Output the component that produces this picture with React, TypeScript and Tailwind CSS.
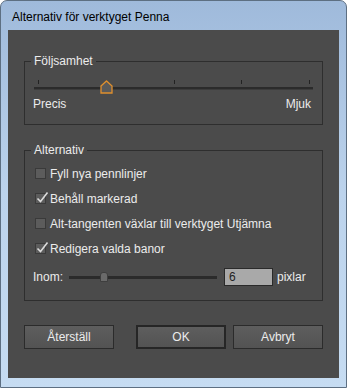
import React from "react";

const font = { fontFamily: '"Liberation Sans", Arial, sans-serif' };

function Checkbox({ checked, label }: { checked: boolean; label: string }) {
  return (
    <div className="flex items-center h-[25px] pl-[10px]">
      <div className="relative w-[11px] h-[11px] border border-[#3a3a3a] bg-[#5c5c5c]">
        {checked && (
          <svg className="absolute left-[0px] top-[-3px]" width="13" height="13" viewBox="0 0 13 13">
            <path d="M1.5 7.5 L4.5 10.5 L11.5 1.5" fill="none" stroke="#dcdcdc" strokeWidth="1.6" />
          </svg>
        )}
      </div>
      <span className="ml-[4px] text-[12px] leading-[14px] text-[#ececec]">{label}</span>
    </div>
  );
}

function Button({ label, primary }: { label: string; primary?: boolean }) {
  return (
    <div
      className={
        "w-[90px] h-[24px] flex items-center justify-center text-[12px] text-[#ececec] bg-gradient-to-b from-[#5e5e5e] to-[#535353] " +
        (primary ? "border-2 border-[#262626]" : "border border-[#2b2b2b]")
      }
    >
      {label}
    </div>
  );
}

export default function App() {
  const ticks = [4, 72, 140, 207, 275];
  return (
    <div
      style={font}
      className="w-[347px] h-[388px] rounded-t-[7px] border border-[#5d6f82] bg-gradient-to-b from-[#9fbadb] via-[#bcd3ec] to-[#c6dcf2] flex flex-col px-[7px] pb-[9px]"
    >
      <div className="h-[29px] flex items-center pl-[4px] pt-[2px] text-[12px] text-black">
        Alternativ för verktyget Penna
      </div>
      <div className="flex-1 bg-[#4b4b4b] px-[16px] flex flex-col">
        <fieldset className="mt-[24px] border border-[#2e2e2e]">
          <legend className="ml-[6px] px-[3px] text-[12px] leading-[14px] text-[#ececec]">Följsamhet</legend>
          <div className="relative mx-[9px] mt-[11px] h-[16px]">
            <div className="absolute left-0 right-0 top-[8px] h-[3px] bg-[#2b2b2b] border-b border-[#3c3c3c]" />
            {ticks.map((t, i) => (
              <div key={i} className="absolute top-[1px] w-[1px] h-[4px] bg-[#222]" style={{ left: t }} />
            ))}
            <svg className="absolute left-[66px] top-[1px]" width="13" height="14" viewBox="0 0 13 14">
              <path d="M1 6 L6.5 1 L12 6 L12 13 L1 13 Z" fill="#5a5a5a" stroke="#e0902e" strokeWidth="1.3" />
            </svg>
          </div>
          <div className="flex justify-between px-[8px] pl-[8px] pr-[11px] mt-[2px] h-[14px] text-[12px] leading-[14px] text-[#ececec]">
            <span>Precis</span>
            <span>Mjuk</span>
          </div>
          <div className="h-[13px]" />
        </fieldset>

        <fieldset className="mt-[18px] border border-[#2e2e2e]">
          <legend className="ml-[6px] px-[3px] text-[12px] leading-[14px] text-[#ececec]">Alternativ</legend>
          <div className="mt-[4px]">
            <Checkbox checked={false} label="Fyll nya pennlinjer" />
            <Checkbox checked={true} label="Behåll markerad" />
            <Checkbox checked={false} label="Alt-tangenten växlar till verktyget Utjämna" />
            <Checkbox checked={true} label="Redigera valda banor" />
          </div>
          <div className="mt-[4px] h-[24px] flex items-center pl-[8px] text-[12px] text-[#ececec]">
            <span>Inom:</span>
            <div className="relative ml-[6px] w-[148px] h-[12px]">
              <div className="absolute left-0 right-0 top-[5px] h-[3px] bg-[#2b2b2b]" />
              <div className="absolute left-[31px] top-[1px] w-[8px] h-[10px] rounded-t-[3px] bg-[#6a6a6a] border border-[#3e3e3e]" />
            </div>
            <div className="ml-[7px] w-[49px] h-[18px] bg-[#a9a9a9] border border-[#2a2a2a] flex items-center pl-[4px] text-[#222]">
              6
            </div>
            <span className="ml-[4px]">pixlar</span>
          </div>
          <div className="h-[11px]" />
        </fieldset>

        <div className="mt-[24px] flex">
          <Button label="Återställ" />
          <div className="ml-auto flex gap-[7px]">
            <Button label="OK" primary />
            <Button label="Avbryt" />
          </div>
        </div>
      </div>
    </div>
  );
}
